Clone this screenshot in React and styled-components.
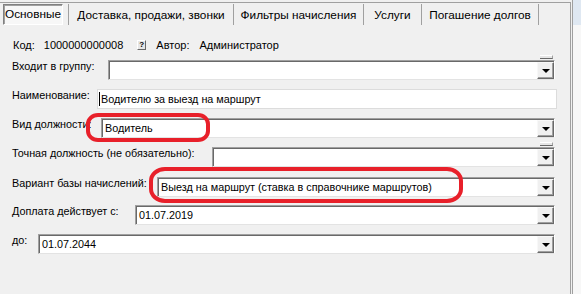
import React from "react";
import styled, { createGlobalStyle, css } from "styled-components";

const GlobalStyle = createGlobalStyle`
  html, body {
    margin: 0;
    padding: 0;
    background: #f0f0f0;
  }
  body {
    font-family: "Liberation Sans", Arial, sans-serif;
    font-size: 11px;
    color: #000;
  }
`;

const Window = styled.div`
  position: relative;
  display: flex;
  width: 581px;
  height: 294px;
  background: #f0f0f0;
  overflow: hidden;
`;

const Panel = styled.div`
  width: 570px;
  margin-top: 2px;
  display: flex;
  flex-direction: column;
  border-top: 1px solid #a0a0a0;
  border-right: 1px solid #a0a0a0;
`;

const Side = styled.div`
  width: 8px;
  margin-left: 1px;
  border-left: 1px solid #a0a0a0;
  display: flex;
  flex-direction: column;
`;

const SideTop = styled.div`
  height: 25px;
  background: #dfe8f2;
`;

const SideRest = styled.div`
  flex: 1;
  background: #f7f7f7;
`;

/* ---- tabs ---- */

const TabBar = styled.div`
  display: flex;
  height: 22px;
  font-size: 11.8px;
`;

const TabCell = styled.div`
  width: ${(p) => p.w}px;
  box-sizing: border-box;
  display: flex;
  align-items: center;
  justify-content: center;
  margin: 1px 0 0;
  border-right: 1px solid #a0a0a0;
  white-space: nowrap;
`;

const ActiveTab = styled.div`
  box-sizing: border-box;
  width: 61px;
  height: 21px;
  margin: -1px 5px 0 3px;
  display: flex;
  align-items: center;
  justify-content: center;
  background: #f7f7f7;
  border: 1px solid;
  border-color: #808080 #ffffff #ffffff #808080;
  box-shadow: inset 1px 1px 0 #a0a0a0;
`;

/* ---- form ---- */

const Form = styled.div`
  display: flex;
  flex-direction: column;
  padding: 13px 15px 0 12px;
`;

const CodeRow = styled.div`
  display: flex;
  align-items: center;
  height: 14px;
  margin-bottom: 8px;
  padding-left: 1px;
`;

const Plain = styled.span`
  margin-right: ${(p) => p.gap || 0}px;
  white-space: nowrap;
`;

const HelpButton = styled.span`
  box-sizing: border-box;
  width: 9px;
  height: 10px;
  margin-right: 10px;
  display: inline-flex;
  align-items: center;
  justify-content: center;
  font-size: 8px;
  font-weight: bold;
  line-height: 1;
  background: #e6e6e6;
  border: 1px solid;
  border-color: #ffffff #696969 #696969 #ffffff;
`;

const FieldRow = styled.div`
  display: grid;
  grid-template-columns: ${(p) => p.label}px 1fr;
  height: ${(p) => p.h || 29}px;
`;

const Label = styled.div`
  font-size: 10.8px;
  line-height: 13px;
  white-space: nowrap;
`;

const Combo = styled.div`
  position: relative;
  box-sizing: border-box;
  height: 20px;
  display: flex;
  align-items: center;
  background: #fff;
  border-style: solid;
  border-width: 1px;
  border-color: #a0a0a0 #ffffff #e3e3e3 #a0a0a0;
  box-shadow: inset 1px 1px 0 #696969;
  ${(p) =>
    p.peek &&
    css`
      &::before {
        content: "";
        position: absolute;
        right: 1px;
        top: -6px;
        width: 13px;
        height: 4px;
        box-sizing: border-box;
        background: #e6e6e6;
        border-top: 1px solid #ffffff;
        border-bottom: 1px solid #696969;
        border-right: 1px solid #a0a0a0;
      }
    `}
`;

const Edit = styled.div`
  box-sizing: border-box;
  height: 20px;
  margin-right: -2px;
  display: flex;
  align-items: center;
  background: #fff;
  border: 1px solid #dcdcdc;
  padding-left: 1px;
`;

const Caret = styled.span`
  width: 1px;
  height: 14px;
  background: #000;
  margin-right: 1px;
`;

const Value = styled.span`
  flex: 1;
  padding-left: ${(p) => p.pad ?? 3}px;
  font-size: 10.8px;
  white-space: nowrap;
  overflow: hidden;
`;

const DropButton = styled.span`
  box-sizing: border-box;
  align-self: stretch;
  width: 17px;
  margin: 1px 0 0;
  display: flex;
  align-items: center;
  justify-content: center;
  background: #f0f0f0;
  border: 1px solid;
  border-color: #f8f8f8 #696969 #696969 #f8f8f8;
  box-shadow: inset -1px -1px 0 #a0a0a0;

  &::after {
    content: "";
    width: 0;
    height: 0;
    margin-top: 1px;
    border-left: 4px solid transparent;
    border-right: 4px solid transparent;
    border-top: 4px solid #000;
  }
`;

const Mark = styled.div`
  position: absolute;
  box-sizing: border-box;
  left: ${(p) => p.x}px;
  top: ${(p) => p.y}px;
  width: ${(p) => p.w}px;
  height: ${(p) => p.h}px;
  border: 4px solid #e8202a;
  border-radius: ${(p) => p.r};
  pointer-events: none;
`;

const ComboField = ({ label, labelWidth, value, peek, h }) => (
  <FieldRow label={labelWidth} h={h}>
    <Label>{label}</Label>
    <Combo peek={peek}>
      <Value>{value}</Value>
      <DropButton />
    </Combo>
  </FieldRow>
);

const App = () => {
  const tabs = [
    { title: "Доставка, продажи, звонки", w: 165 },
    { title: "Фильтры начисления", w: 130 },
    { title: "Услуги", w: 58 },
    { title: "Погашение долгов", w: 117 },
  ];

  return (
    <>
      <GlobalStyle />
      <Window>
        <Panel>
          <TabBar>
            <TabCell w={69}>
              <ActiveTab>Основные</ActiveTab>
            </TabCell>
            {tabs.map((t) => (
              <TabCell key={t.title} w={t.w}>
                {t.title}
              </TabCell>
            ))}
          </TabBar>

          <Form>
            <CodeRow>
              <Plain gap={9}>Код:</Plain>
              <Plain gap={14}>1000000000008</Plain>
              <HelpButton>?</HelpButton>
              <Plain gap={10}>Автор:</Plain>
              <Plain>Администратор</Plain>
            </CodeRow>

            <ComboField label="Входит в группу:" labelWidth={96} value="" peek />

            <FieldRow label={85}>
              <Label>Наименование:</Label>
              <Edit>
                <Caret />
                <Value pad={0}>Водителю за выезд на маршрут</Value>
              </Edit>
            </FieldRow>

            <ComboField label="Вид должности:" labelWidth={89} value="Водитель" />
            <ComboField
              label="Точная должность (не обязательно):"
              labelWidth={200}
              value=""
              peek
              h={30}
            />
            <ComboField
              label="Вариант базы начислений:"
              labelWidth={145}
              value="Выезд на маршрут (ставка в справочнике маршрутов)"
              h={28}
            />
            <ComboField
              label="Доплата действует с:"
              labelWidth={123}
              value="01.07.2019"
            />
            <ComboField label="до:" labelWidth={26} value="01.07.2044" />
          </Form>
        </Panel>
        <Side>
          <SideTop />
          <SideRest />
        </Side>

        <Mark x={86} y={113} w={124} h={29} r="12px / 11px" />
        <Mark x={149} y={167} w={314} h={36} r="16px / 14px" />
      </Window>
    </>
  );
};

export default App;
